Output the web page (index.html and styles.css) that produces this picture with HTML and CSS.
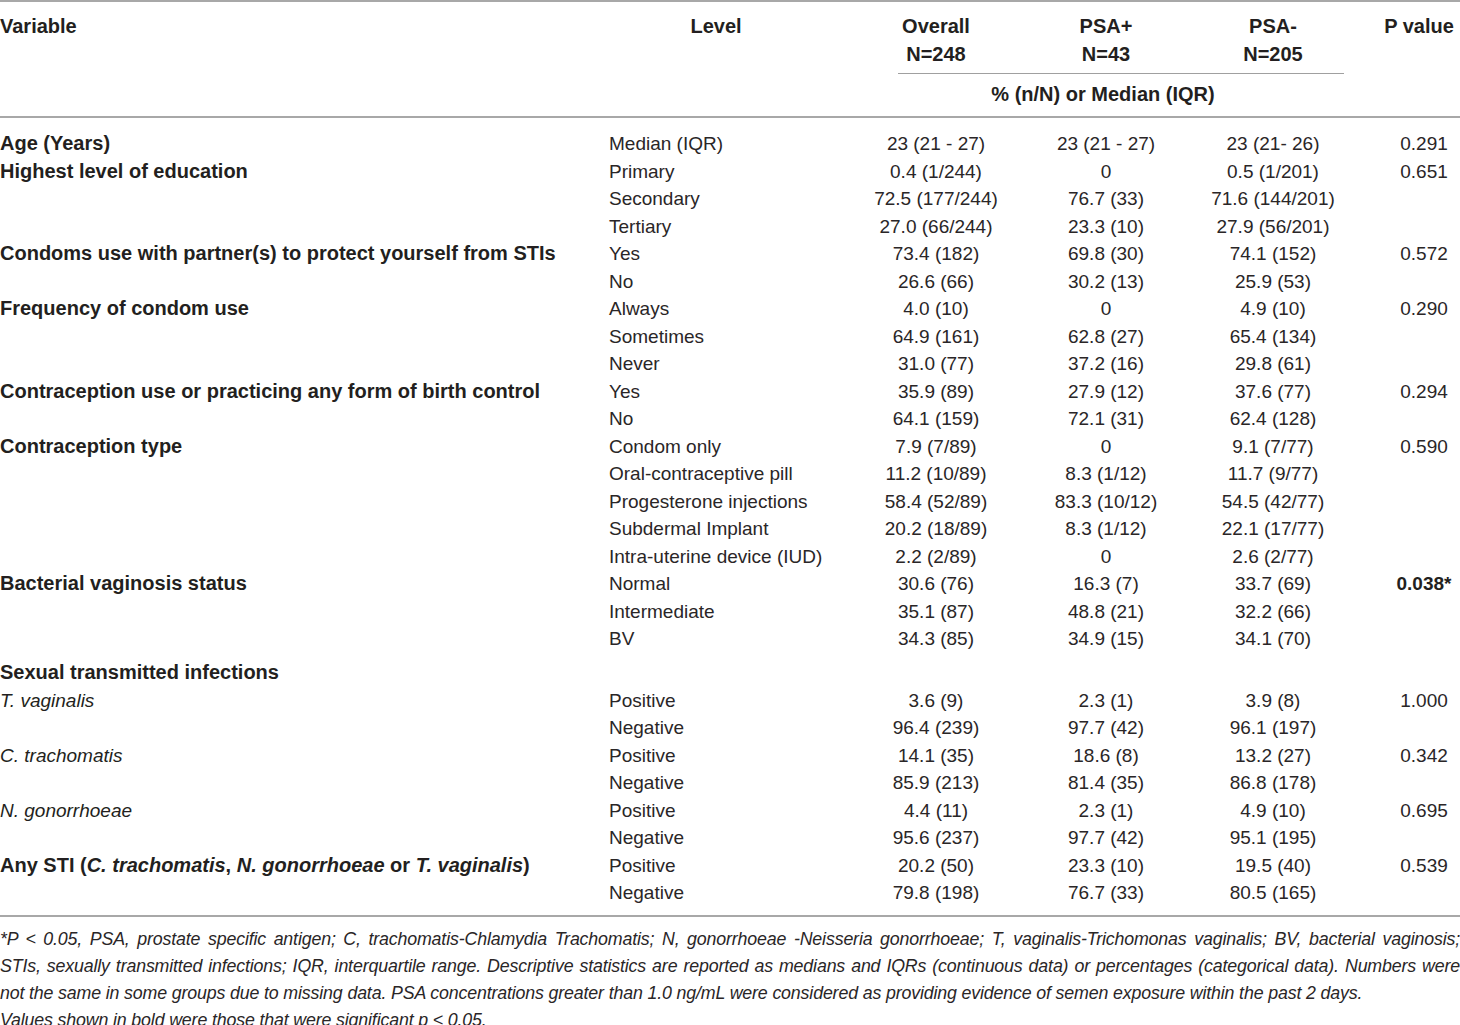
FILE: index.html
```html
<!DOCTYPE html>
<html>
<head>
<meta charset="utf-8">
<link rel="stylesheet" href="styles.css">
</head>
<body>
<div class="page">
<table class="stats">
<colgroup>
<col class="c-var"><col class="c-lvl"><col class="c-ov"><col class="c-pp"><col class="c-pm"><col class="c-p">
</colgroup>
<thead>
<tr class="h1">
<th class="var">Variable</th>
<th class="lvl">Level</th>
<th>Overall<br>N=248</th>
<th>PSA+<br>N=43</th>
<th>PSA-<br>N=205</th>
<th class="pv">P value</th>
</tr>
<tr class="h2">
<th></th><th></th>
<th colspan="3" class="span"><div class="subrule"></div><div class="subtxt">% (n/N) or Median (IQR)</div></th>
<th></th>
</tr>
</thead>
<tbody>
<tr class="first"><td class="var"><b>Age (Years)</b></td><td class="lvl">Median (IQR)</td><td>23 (21 - 27)</td><td>23 (21 - 27)</td><td>23 (21- 26)</td><td class="pv">0.291</td></tr>
<tr><td class="var"><b>Highest level of education</b></td><td class="lvl">Primary</td><td>0.4 (1/244)</td><td>0</td><td>0.5 (1/201)</td><td class="pv">0.651</td></tr>
<tr><td class="var"></td><td class="lvl">Secondary</td><td>72.5 (177/244)</td><td>76.7 (33)</td><td>71.6 (144/201)</td><td class="pv"></td></tr>
<tr><td class="var"></td><td class="lvl">Tertiary</td><td>27.0 (66/244)</td><td>23.3 (10)</td><td>27.9 (56/201)</td><td class="pv"></td></tr>
<tr><td class="var"><b>Condoms use with partner(s) to protect yourself from STIs</b></td><td class="lvl">Yes</td><td>73.4 (182)</td><td>69.8 (30)</td><td>74.1 (152)</td><td class="pv">0.572</td></tr>
<tr><td class="var"></td><td class="lvl">No</td><td>26.6 (66)</td><td>30.2 (13)</td><td>25.9 (53)</td><td class="pv"></td></tr>
<tr><td class="var"><b>Frequency of condom use</b></td><td class="lvl">Always</td><td>4.0 (10)</td><td>0</td><td>4.9 (10)</td><td class="pv">0.290</td></tr>
<tr><td class="var"></td><td class="lvl">Sometimes</td><td>64.9 (161)</td><td>62.8 (27)</td><td>65.4 (134)</td><td class="pv"></td></tr>
<tr><td class="var"></td><td class="lvl">Never</td><td>31.0 (77)</td><td>37.2 (16)</td><td>29.8 (61)</td><td class="pv"></td></tr>
<tr><td class="var"><b>Contraception use or practicing any form of birth control</b></td><td class="lvl">Yes</td><td>35.9 (89)</td><td>27.9 (12)</td><td>37.6 (77)</td><td class="pv">0.294</td></tr>
<tr><td class="var"></td><td class="lvl">No</td><td>64.1 (159)</td><td>72.1 (31)</td><td>62.4 (128)</td><td class="pv"></td></tr>
<tr><td class="var"><b>Contraception type</b></td><td class="lvl">Condom only</td><td>7.9 (7/89)</td><td>0</td><td>9.1 (7/77)</td><td class="pv">0.590</td></tr>
<tr><td class="var"></td><td class="lvl">Oral-contraceptive pill</td><td>11.2 (10/89)</td><td>8.3 (1/12)</td><td>11.7 (9/77)</td><td class="pv"></td></tr>
<tr><td class="var"></td><td class="lvl">Progesterone injections</td><td>58.4 (52/89)</td><td>83.3 (10/12)</td><td>54.5 (42/77)</td><td class="pv"></td></tr>
<tr><td class="var"></td><td class="lvl">Subdermal Implant</td><td>20.2 (18/89)</td><td>8.3 (1/12)</td><td>22.1 (17/77)</td><td class="pv"></td></tr>
<tr><td class="var"></td><td class="lvl">Intra-uterine device (IUD)</td><td>2.2 (2/89)</td><td>0</td><td>2.6 (2/77)</td><td class="pv"></td></tr>
<tr><td class="var"><b>Bacterial vaginosis status</b></td><td class="lvl">Normal</td><td>30.6 (76)</td><td>16.3 (7)</td><td>33.7 (69)</td><td class="pv"><b>0.038*</b></td></tr>
<tr><td class="var"></td><td class="lvl">Intermediate</td><td>35.1 (87)</td><td>48.8 (21)</td><td>32.2 (66)</td><td class="pv"></td></tr>
<tr><td class="var"></td><td class="lvl">BV</td><td>34.3 (85)</td><td>34.9 (15)</td><td>34.1 (70)</td><td class="pv"></td></tr>
<tr class="gap"><td class="var"><b>Sexual transmitted infections</b></td><td class="lvl"></td><td></td><td></td><td></td><td class="pv"></td></tr>
<tr><td class="var"><i>T. vaginalis</i></td><td class="lvl">Positive</td><td>3.6 (9)</td><td>2.3 (1)</td><td>3.9 (8)</td><td class="pv">1.000</td></tr>
<tr><td class="var"></td><td class="lvl">Negative</td><td>96.4 (239)</td><td>97.7 (42)</td><td>96.1 (197)</td><td class="pv"></td></tr>
<tr><td class="var"><i>C. trachomatis</i></td><td class="lvl">Positive</td><td>14.1 (35)</td><td>18.6 (8)</td><td>13.2 (27)</td><td class="pv">0.342</td></tr>
<tr><td class="var"></td><td class="lvl">Negative</td><td>85.9 (213)</td><td>81.4 (35)</td><td>86.8 (178)</td><td class="pv"></td></tr>
<tr><td class="var"><i>N. gonorrhoeae</i></td><td class="lvl">Positive</td><td>4.4 (11)</td><td>2.3 (1)</td><td>4.9 (10)</td><td class="pv">0.695</td></tr>
<tr><td class="var"></td><td class="lvl">Negative</td><td>95.6 (237)</td><td>97.7 (42)</td><td>95.1 (195)</td><td class="pv"></td></tr>
<tr><td class="var"><b>Any STI (<i>C. trachomatis</i>, <i>N. gonorrhoeae</i> or <i>T. vaginalis</i>)</b></td><td class="lvl">Positive</td><td>20.2 (50)</td><td>23.3 (10)</td><td>19.5 (40)</td><td class="pv">0.539</td></tr>
<tr class="last"><td class="var"></td><td class="lvl">Negative</td><td>79.8 (198)</td><td>76.7 (33)</td><td>80.5 (165)</td><td class="pv"></td></tr>
</tbody>
</table>
<div class="notes">
<p class="note just">*P &lt; 0.05, PSA, prostate specific antigen; C, trachomatis-Chlamydia Trachomatis; N, gonorrhoeae -Neisseria gonorrhoeae; T, vaginalis-Trichomonas vaginalis; BV, bacterial vaginosis; <span class="keep">STIs, sexually</span> transmitted infections; IQR, interquartile range. Descriptive statistics are reported as medians and IQRs (continuous data) or percentages (categorical data). <span class="keep">Numbers were</span> not the same in some groups due to missing data. PSA concentrations greater than 1.0 ng/mL were considered as providing evidence of semen exposure within the past 2 days.</p>
<p class="note">Values shown in bold were those that were significant p &lt; 0.05.</p>
</div>
</div>
</body>
</html>
```
FILE: styles.css
```css
html, body {
  margin: 0;
  padding: 0;
  background: #ffffff;
}
.page {
  width: 1460px;
  font-family: "Liberation Sans", Arial, sans-serif;
  color: #231f20;
}
.stats {
  width: 1460px;
  table-layout: fixed;
  border-collapse: collapse;
  border-spacing: 0;
}
.c-var { width: 600px; }
.c-lvl { width: 232px; }
.c-ov { width: 208px; }
.c-pp { width: 132px; }
.c-pm { width: 202px; }
.c-p { width: 86px; }

.stats th {
  font-weight: bold;
  font-size: 20px;
  line-height: 28px;
  padding: 0;
  text-align: center;
  vertical-align: top;
}
.stats thead tr.h1 th {
  border-top: 2px solid #a8a8a8;
  padding-top: 10px;
  padding-bottom: 5px;
}
.stats th.var { text-align: left; }
.stats th.lvl { padding-left: 0; }
.stats th.pv { padding-left: 4px; }
.stats thead tr.h2 th {
  border-bottom: 2px solid #a8a8a8;
  padding-bottom: 8px;
}
.subrule {
  margin: 0 30px 0 66px;
  border-top: 1px solid #a0a0a0;
  height: 0;
}
.subtxt {
  padding-top: 6px;
}
.stats td {
  font-size: 19px;
  line-height: 27.5px;
  padding: 0;
  text-align: center;
  white-space: nowrap;
  vertical-align: top;
  color: #2a2627;
}
.stats td.var {
  text-align: left;
  color: #231f20;
}
.stats td.var b {
  font-size: 20px;
}
.stats td.var i {
  font-size: 19px;
}
.stats td.var b i {
  font-size: 20px;
}
.stats td.lvl {
  text-align: left;
  padding-left: 9px;
}
.stats td.pv {
  padding-left: 14px;
}
.stats td.pv b {
  color: #231f20;
}
.stats tr.first td { padding-top: 12px; }
.stats tr.gap td { padding-top: 6.5px; }
.stats tr.last td {
  padding-bottom: 8px;
  border-bottom: 2px solid #a8a8a8;
}
.notes {
  padding-top: 9px;
}
.note {
  margin: 0;
  font-style: italic;
  font-size: 17.8px;
  letter-spacing: -0.15px;
  line-height: 27px;
  color: #2a2627;
}
.note.just {
  text-align: justify;
}
.keep {
  white-space: nowrap;
}
```
